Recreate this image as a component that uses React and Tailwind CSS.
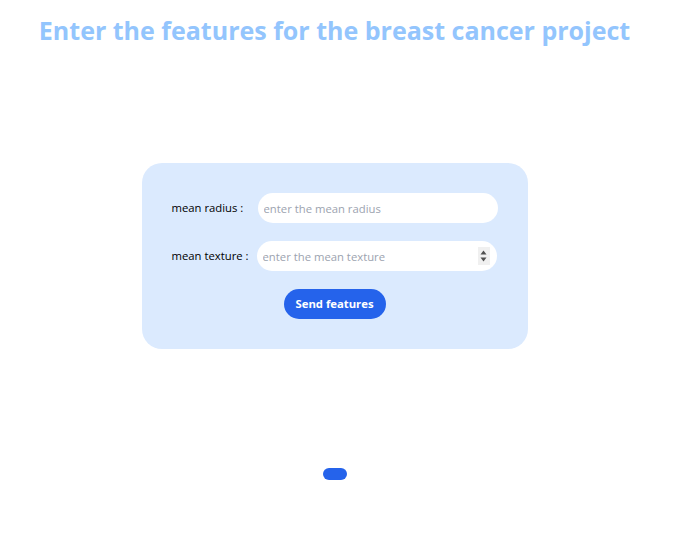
export default function App() {
  return (
    <div className="min-h-[556px] bg-white font-['Open_Sans',sans-serif] pr-[28px]">
      <h1 className="pt-[14px] text-center text-[25px] font-bold text-[#93c5fd] leading-[32px]">
        Enter the features for the breast cancer project
      </h1>

      <div className="mt-[117px] mx-auto w-[386px] h-[186px] rounded-[20px] bg-[#dbeafe] pt-[30px] px-[30px]">
        <div className="flex items-center">
          <label className="w-[86px] text-[11.3px] text-black">mean radius :</label>
          <input
            type="text"
            placeholder="enter the mean radius"
            className="w-[240px] h-[30px] rounded-full bg-white px-[6px] text-[11.3px] outline-none placeholder:text-[#9ca3af]"
          />
        </div>
        <div className="flex items-center mt-[18px]">
          <label className="w-[85px] text-[11.3px] text-black">mean texture :</label>
          <div className="relative">
            <input
              type="number"
              placeholder="enter the mean texture"
              className="w-[240px] h-[30px] rounded-full bg-white px-[6px] text-[11.3px] outline-none placeholder:text-[#9ca3af] [appearance:textfield] [&::-webkit-inner-spin-button]:appearance-none"
            />
            <div className="absolute right-[7px] top-[6px] w-[12px] h-[18px] bg-[#f0f0f0] flex flex-col items-center justify-center gap-[2px]">
              <svg width="7" height="5" viewBox="0 0 7 5"><path d="M3.5 0.5 L6.5 4.5 L0.5 4.5 Z" fill="#505050" /></svg>
              <svg width="7" height="5" viewBox="0 0 7 5"><path d="M0.5 0.5 L6.5 0.5 L3.5 4.5 Z" fill="#505050" /></svg>
            </div>
          </div>
        </div>
        <div className="flex justify-center mt-[18px]">
          <button className="w-[102px] h-[30px] rounded-full bg-[#2563eb] pt-[1px] text-white text-[11.3px] font-bold">
            Send features
          </button>
        </div>
      </div>

      <div className="flex justify-center mt-[119px]">
        <div className="w-[24px] h-[12px] rounded-full bg-[#2563eb]" />
      </div>
    </div>
  );
}
